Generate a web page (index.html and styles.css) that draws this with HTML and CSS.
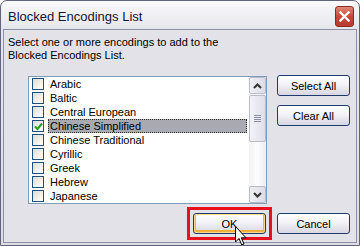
FILE: index.html
```html
<!DOCTYPE html>
<html lang="en">

<head>
    <meta charset="UTF-8">
    <title>Blocked Encodings List</title>
    <link rel="stylesheet" href="styles.css">
</head>

<body>
    <div class="window">
        <div class="titlebar">
            <span class="title">Blocked Encodings List</span>
            <button class="close">
                <svg width="11" height="11" viewBox="0 0 11 11"><path d="M1.5 1.5 L9.5 9.5 M9.5 1.5 L1.5 9.5" stroke="#fff" stroke-width="2.4" stroke-linecap="square"/></svg>
            </button>
        </div>
        <div class="client">
            <p class="intro">Select one or more encodings to add to the<br>Blocked Encodings List.</p>
            <div class="main">
                <div class="listbox">
                    <ul class="items">
                        <li><span class="check"></span><span class="label">Arabic</span></li>
                        <li><span class="check"></span><span class="label">Baltic</span></li>
                        <li><span class="check"></span><span class="label">Central European</span></li>
                        <li class="selected"><span class="check checked">
                            <svg width="9" height="9" viewBox="0 0 9 9"><path d="M1 4.5 L3.5 7 L8 1.5" fill="none" stroke="#21a121" stroke-width="2"/></svg>
                        </span><span class="label">Chinese Simplified</span></li>
                        <li><span class="check"></span><span class="label">Chinese Traditional</span></li>
                        <li><span class="check"></span><span class="label">Cyrillic</span></li>
                        <li><span class="check"></span><span class="label">Greek</span></li>
                        <li><span class="check"></span><span class="label">Hebrew</span></li>
                        <li><span class="check"></span><span class="label">Japanese</span></li>
                    </ul>
                    <div class="scrollbar">
                        <div class="sb-btn">
                            <svg width="9" height="6" viewBox="0 0 9 6"><path d="M1 5 L4.5 1.5 L8 5" fill="none" stroke="#333" stroke-width="2"/></svg>
                        </div>
                        <div class="sb-thumb"><span></span><span></span><span></span><span></span></div>
                        <div class="sb-track"></div>
                        <div class="sb-btn">
                            <svg width="9" height="6" viewBox="0 0 9 6"><path d="M1 1 L4.5 4.5 L8 1" fill="none" stroke="#333" stroke-width="2"/></svg>
                        </div>
                    </div>
                </div>
                <div class="side">
                    <button class="btn">Select All</button>
                    <button class="btn">Clear All</button>
                </div>
            </div>
            <div class="footer">
                <span class="ring"><button class="btn btn-default">OK</button></span>
                <button class="btn">Cancel</button>
            </div>
        </div>
        <svg class="cursor" width="14" height="22" viewBox="0 0 14 22">
            <path d="M0.5 0.5 L0.5 16 L4 12.5 L6.8 19 L9 18 L6.3 11.8 L11 11.8 Z" fill="#fff" stroke="#000" stroke-width="1" stroke-linejoin="miter"/>
        </svg>
    </div>
</body>

</html>
```

FILE: styles.css
```css
html, body {
    margin: 0;
    padding: 0;
}

body {
    font-family: "Liberation Sans", Arial, sans-serif;
    font-size: 11px;
    color: #000;
}

.window {
    position: relative;
    box-sizing: border-box;
    width: 360px;
    height: 246px;
    border: 1px solid #62657a;
    border-radius: 7px 7px 0 0;
    background: linear-gradient(#fafafc, #e4e4ec 30px, #dcdce4);
    display: flex;
    flex-direction: column;
    overflow: hidden;
}

.titlebar {
    height: 28px;
    display: flex;
    align-items: center;
    justify-content: space-between;
    padding: 0 5px 0 7px;
}

.title {
    font-size: 13px;
    color: #151536;
    padding-top: 2px;
}

.close {
    width: 19px;
    height: 21px;
    margin-top: 2px;
    padding: 0;
    border: 1px solid #8a2a22;
    border-radius: 3px;
    background: linear-gradient(#e08878, #c8483a 50%, #b83a2e);
    display: flex;
    align-items: center;
    justify-content: center;
}

.client {
    flex: 1;
    margin: 0 2px 2px;
    border: 1px solid #8e90a5;
    background: #e3e2e9;
    padding: 6px 4px 0;
}

.intro {
    margin: 0;
    line-height: 13px;
}

.main {
    display: flex;
    margin-top: 14px;
    margin-left: 20px;
}

.listbox {
    display: flex;
    width: 239px;
    height: 128px;
    box-sizing: border-box;
    border: 1px solid #7f9db9;
    background: #fff;
}

.items {
    flex: 1;
    list-style: none;
    margin: 0;
    padding: 0 2px 0 0;
}

.items li {
    height: 14px;
    display: flex;
    align-items: center;
}

.check {
    box-sizing: border-box;
    width: 12px;
    height: 12px;
    margin: 0 4px 0 3px;
    border: 1px solid #1c5180;
    background: linear-gradient(135deg, #dcdcd7, #fff);
    display: flex;
    align-items: center;
    justify-content: center;
}

.label {
    flex: 1;
    height: 14px;
    line-height: 14px;
    padding-left: 2px;
    box-sizing: border-box;
}

.selected .label {
    background: #a9a9b1;
    outline: 1px dotted #333;
    outline-offset: -1px;
}

.scrollbar {
    width: 17px;
    display: flex;
    flex-direction: column;
    background: linear-gradient(90deg, #f3f3f6, #fdfdfd 50%, #ececf2);
}

.sb-btn {
    box-sizing: border-box;
    height: 17px;
    border: 1px solid #b7bacb;
    border-radius: 2px;
    background: linear-gradient(90deg, #eeeef4, #dcdde8);
    display: flex;
    align-items: center;
    justify-content: center;
}

.sb-thumb {
    box-sizing: border-box;
    height: 47px;
    margin: 1px 0;
    border: 1px solid #b7bacb;
    border-radius: 2px;
    background: linear-gradient(90deg, #f2f2f7, #dedfe9);
    display: flex;
    flex-direction: column;
    align-items: center;
    justify-content: center;
    gap: 1px;
}

.sb-thumb span {
    width: 7px;
    height: 1px;
    background: #8d90a3;
}

.sb-track {
    flex: 1;
}

.side {
    display: flex;
    flex-direction: column;
    gap: 9px;
    margin-left: 10px;
    margin-top: -1px;
}

.btn {
    box-sizing: border-box;
    width: 73px;
    height: 21px;
    padding: 0;
    border: 1px solid #1f3b6e;
    border-radius: 3px;
    background: linear-gradient(#ffffff, #f4f4f8 40%, #d8d6e2);
    font-family: "Liberation Sans", Arial, sans-serif;
    font-size: 11px;
    color: #000;
}

.footer {
    display: flex;
    justify-content: flex-end;
    align-items: center;
    gap: 5px;
    margin-top: 3px;
    padding-right: 2px;
}

.ring {
    display: flex;
    padding: 3px;
    border: 3px solid #e8101a;
}

.btn-default {
    box-shadow: inset 0 0 0 1px #fbd98c, inset 0 -1px 0 2px #f2b13c;
}

.cursor {
    position: absolute;
    left: 234px;
    top: 225px;
}
```
